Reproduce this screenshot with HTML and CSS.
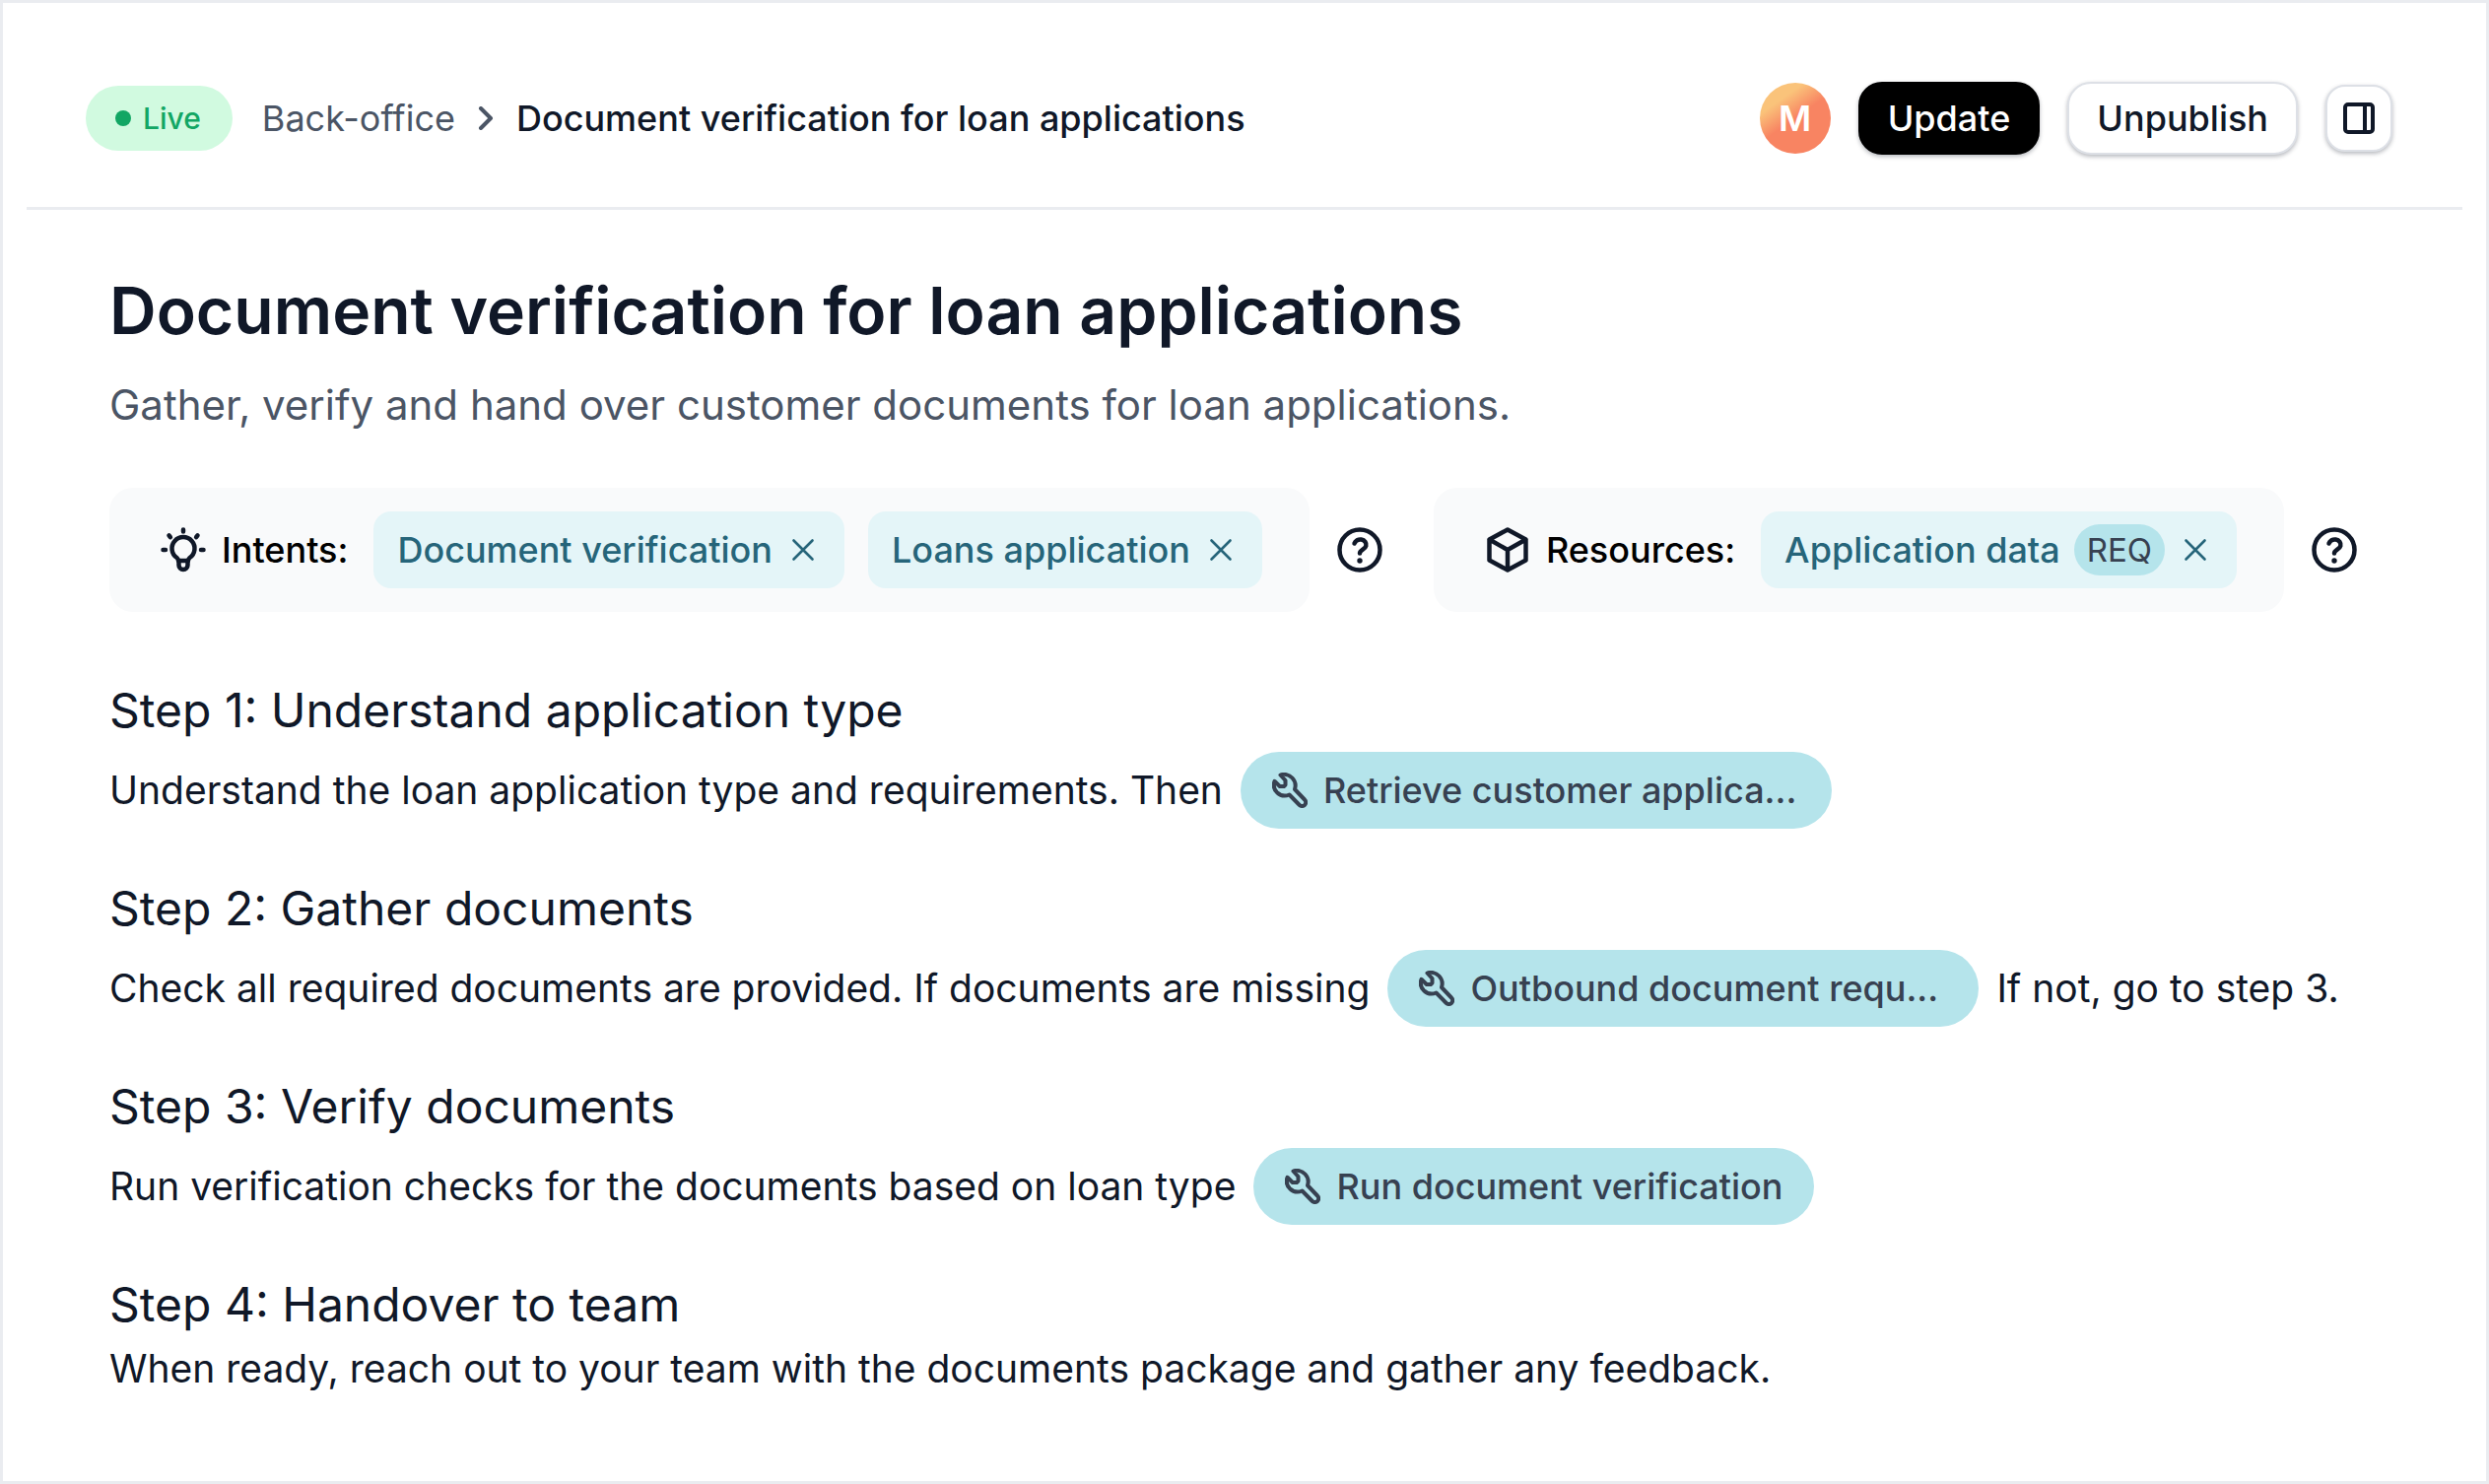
FILE: index.html
```html
<!DOCTYPE html>
<html lang="en">
<head>
    <meta charset="UTF-8">
    <meta name="viewport" content="width=device-width, initial-scale=1.0">
    <title>Document verification for loan applications</title>
    <link rel="stylesheet" href="styles.css">
</head>
<body>
    <!-- shared icons -->
    <svg class="sprite" aria-hidden="true">
        <symbol id="icon-close" viewBox="0 0 24 24">
            <path d="M2.5 2.5l19 19M21.5 2.5l-19 19" stroke-width="2.6"/>
        </symbol>
        <symbol id="icon-help" viewBox="0 0 46 46">
            <circle cx="23" cy="23" r="20.5" stroke-width="4.5"/>
            <path d="M17.500 16.500c1-3 4-4.500 7-4 3.500.6 5.500 3.500 4.800 6.500-.8 3.500-6.300 4-6.300 7.500" stroke-width="4.5"/>
            <circle cx="23" cy="34" r="2.7" fill="currentColor" stroke="none"/>
        </symbol>
        <symbol id="icon-wrench" viewBox="0 0 36 36">
            <path d="M8.500 2.500C12 1.200 17 1.800 20.500 5.500C23.800 9 24.300 13 23 17L33 27.500A3.700 3.700 0 0 1 27.800 33L17.500 22.500C13 24.300 8.500 23.500 5 20.200C1.800 17 1.200 12.500 2.500 8.800L7.800 14H12L13.500 12.500V8Z" stroke-width="4"/>
        </symbol>
    </svg>

    <div class="page">
        <header class="topbar">
            <span class="status"><span class="status-dot"></span>Live</span>
            <nav class="breadcrumb">
                <a href="#">Back-office</a>
                <svg class="chevron" viewBox="0 0 16 24"><path d="M3 2l10 10L3 22"/></svg>
                <span class="current">Document verification for loan applications</span>
            </nav>
            <div class="actions">
                <span class="avatar">M</span>
                <button class="button button-dark">Update</button>
                <button class="button">Unpublish</button>
                <button class="button button-icon" aria-label="Toggle panel">
                    <svg viewBox="0 0 32 32"><rect x="2" y="2" width="28" height="28" rx="3"/><path d="M22 2v28"/></svg>
                </button>
            </div>
        </header>

        <main class="content">
            <h1>Document verification for loan applications</h1>
            <p class="subtitle">Gather, verify and hand over customer documents for loan applications.</p>

            <div class="tags">
                <div class="tag-box">
                    <svg class="tag-icon" viewBox="0 0 54 54">
                        <path d="M27 6.500v2M12.500 12.300l1.400 1.900M41.500 12.300l-1.400 1.900M6.500 27h2.500M45 27h2.500"/>
                        <path d="M22 38c0-1.500-.5-2-1.500-3a11.500 11.500 0 1 1 13 0c-1 1-1.500 1.500-1.500 3z"/>
                        <path d="M22.500 38v4.500a4.500 4.500 0 0 0 9 0V38"/>
                    </svg>
                    <span class="tag-label">Intents:</span>
                    <span class="tag">Document verification<button class="remove" aria-label="Remove"><svg><use href="#icon-close"/></svg></button></span>
                    <span class="tag">Loans application<button class="remove" aria-label="Remove"><svg><use href="#icon-close"/></svg></button></span>
                </div>
                <button class="help" aria-label="Help"><svg><use href="#icon-help"/></svg></button>

                <div class="tag-box">
                    <svg class="tag-icon" viewBox="0 0 54 54">
                        <path d="M27 6.500L45.500 16.500v21L27 47.500 8.500 37.500v-21zM8.500 16.500L27 27l18.500-10.500M27 27v20"/>
                    </svg>
                    <span class="tag-label">Resources:</span>
                    <span class="tag">Application data<span class="required">REQ</span><button class="remove" aria-label="Remove"><svg><use href="#icon-close"/></svg></button></span>
                </div>
                <button class="help" aria-label="Help"><svg><use href="#icon-help"/></svg></button>
            </div>

            <section class="step">
                <h2>Step 1: Understand application type</h2>
                <p>
                    Understand the loan application type and requirements. Then
                    <span class="tool tool-long"><svg><use href="#icon-wrench"/></svg>Retrieve customer applica...</span>
                </p>
            </section>
            <section class="step">
                <h2>Step 2: Gather documents</h2>
                <p>
                    Check all required documents are provided. If documents are missing
                    <span class="tool tool-long"><svg><use href="#icon-wrench"/></svg>Outbound document requ...</span>
                    If not, go to step 3.
                </p>
            </section>
            <section class="step">
                <h2>Step 3: Verify documents</h2>
                <p>
                    Run verification checks for the documents based on loan type
                    <span class="tool"><svg><use href="#icon-wrench"/></svg>Run document verification</span>
                </p>
            </section>
            <section class="step">
                <h2>Step 4: Handover to team</h2>
                <p>When ready, reach out to your team with the documents package and gather any feedback.</p>
            </section>
        </main>
    </div>
</body>
</html>
```

FILE: styles.css
```css
* {
    box-sizing: border-box;
}

body {
    margin: 0;
    font-family: Inter, "Liberation Sans", sans-serif;
    font-size: 36px;
    color: #101828;
    background-color: #fff;
}

svg {
    display: block;
    flex: none;
    fill: none;
    stroke: currentColor;
    stroke-linecap: round;
    stroke-linejoin: round;
}

button {
    font: inherit;
    color: inherit;
    cursor: pointer;
}

.sprite {
    position: absolute;
    width: 0;
    height: 0;
}

.page {
    min-height: 100vh;
    padding: 0 24px;
    border: 3px solid #eaecf0;
}

.topbar {
    display: flex;
    align-items: center;
    height: 210px;
    padding: 27px 71px 0 60px;
    border-bottom: 3px solid #eaecf0;
}

.status {
    display: flex;
    align-items: center;
    gap: 12px;
    height: 66px;
    padding: 0 32px 0 30px;
    border-radius: 33px;
    font-size: 30px;
    font-weight: 500;
    color: #12a664;
    background-color: #d1fae0;
}

.status-dot {
    width: 16px;
    height: 16px;
    border-radius: 50%;
    background-color: #12a664;
}

.breadcrumb {
    display: flex;
    align-items: center;
    gap: 23px;
    margin-left: 30px;
}

.breadcrumb a {
    color: #4b5565;
    text-decoration: none;
}

.chevron {
    width: 16px;
    height: 24px;
    stroke-width: 4;
    color: #4b5565;
}

.current {
    font-weight: 500;
}

.actions {
    display: flex;
    align-items: center;
    gap: 28px;
    margin-left: auto;
}

.avatar {
    display: flex;
    align-items: center;
    justify-content: center;
    width: 72px;
    height: 72px;
    border-radius: 50%;
    font-weight: 600;
    color: #fff;
    background: linear-gradient(145deg, #fac37a 26%, #f88462 50%);
}

.button {
    height: 74px;
    padding: 0 28px;
    border: 2px solid #dde0e6;
    border-radius: 24px;
    font-weight: 500;
    background-color: #fff;
    box-shadow: 0 2px 4px rgba(16, 24, 40, 0.3);
}

.button-dark {
    border-color: #000;
    color: #fff;
    background-color: #000;
}

.button-icon {
    width: 68px;
    height: 68px;
    padding: 0 16px;
    border-radius: 20px;
}

.button-icon svg {
    width: 32px;
    height: 32px;
    stroke-width: 4;
}

.content {
    padding: 60px 84px;
}

h1 {
    margin: 0;
    font-size: 66px;
    font-weight: 600;
    line-height: 84px;
}

.subtitle {
    margin: 27px 0 57px;
    font-size: 42px;
    line-height: 54px;
    color: #4b5565;
}

.tags {
    display: flex;
    align-items: center;
    margin-bottom: 70px;
    white-space: nowrap;
}

.tag-box {
    display: flex;
    align-items: center;
    padding: 24px 48px;
    border-radius: 24px;
    background-color: #f9fafb;
}

.tag-icon {
    width: 54px;
    height: 54px;
    margin-right: 12px;
    stroke-width: 4.5;
}

.tag-label {
    margin-right: 26px;
    font-weight: 500;
    color: #000;
}

.tag {
    display: flex;
    align-items: center;
    height: 78px;
    padding: 0 24px;
    border-radius: 18px;
    font-weight: 500;
    color: #26657a;
    background-color: #e4f5f8;
}

.tag + .tag {
    margin-left: 24px;
}

.required {
    margin-left: 14px;
    padding: 0 13px;
    border-radius: 26px;
    font-size: 33px;
    font-weight: 400;
    line-height: 52px;
    color: #374151;
    background-color: #b5e4eb;
}

.remove {
    margin-left: 13px;
    padding: 6px;
    border: none;
    background: none;
}

.remove svg {
    width: 24px;
    height: 24px;
}

.help {
    margin: 0 52px 0 28px;
    padding: 0;
    border: none;
    background: none;
}

.help:last-child {
    margin-right: 0;
}

.help svg {
    width: 46px;
    height: 46px;
}

.step {
    margin-top: 51px;
}

.step h2 {
    margin: 0 0 12px;
    font-size: 48px;
    font-weight: 400;
    line-height: 60px;
}

.step p {
    display: flex;
    align-items: center;
    gap: 18px;
    margin: 0;
    font-size: 39px;
    line-height: 46px;
}

.tool {
    display: flex;
    align-items: center;
    gap: 16px;
    flex: none;
    height: 78px;
    padding: 0 32px;
    border-radius: 39px;
    font-size: 36px;
    font-weight: 500;
    color: #374151;
    background-color: #b5e4eb;
}

.tool-long {
    width: 600px;
}

.tool svg {
    width: 36px;
    height: 36px;
}
```
